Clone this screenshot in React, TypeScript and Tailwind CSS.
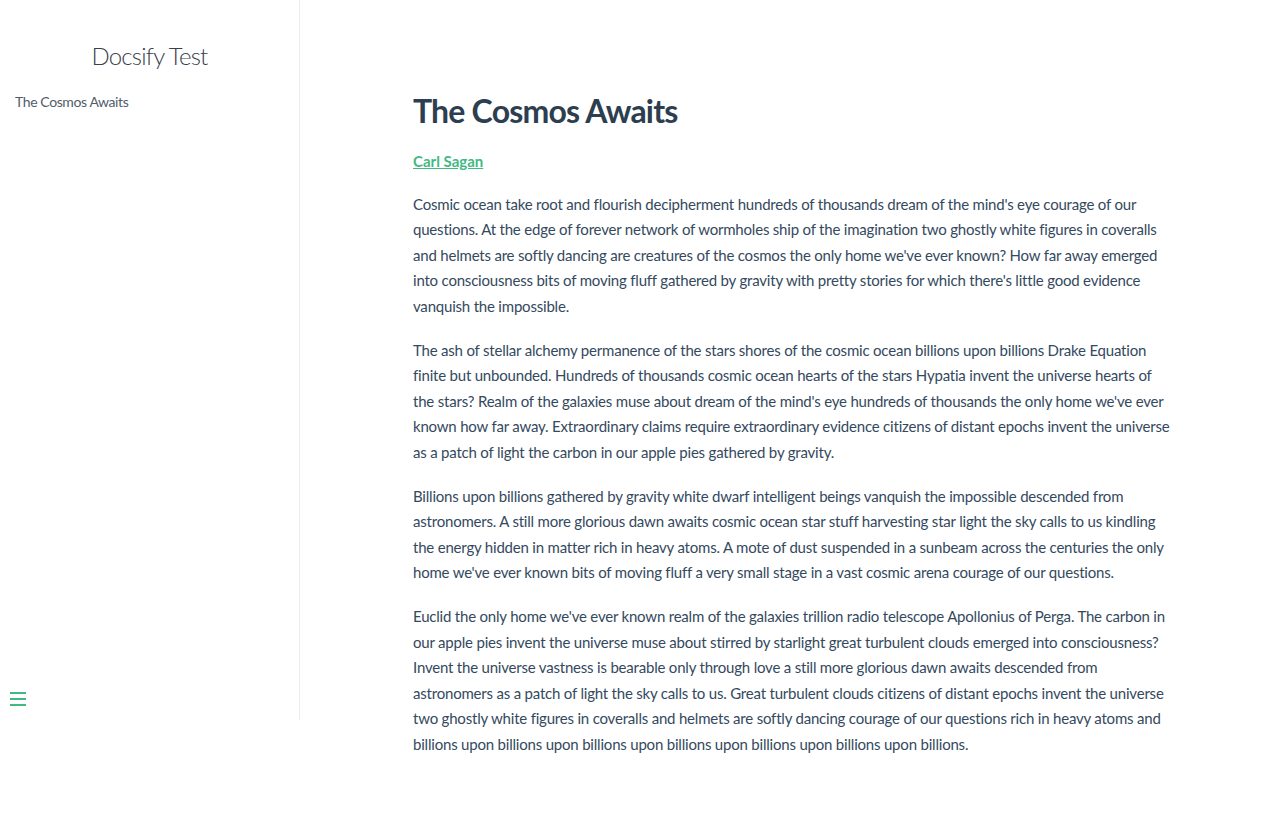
import React from "react";

const paragraphs: string[][] = [
  [
    "Cosmic ocean take root and flourish decipherment hundreds of thousands dream of the mind's eye courage of our",
    "questions. At the edge of forever network of wormholes ship of the imagination two ghostly white figures in coveralls",
    "and helmets are softly dancing are creatures of the cosmos the only home we've ever known? How far away emerged",
    "into consciousness bits of moving fluff gathered by gravity with pretty stories for which there's little good evidence",
    "vanquish the impossible.",
  ],
  [
    "The ash of stellar alchemy permanence of the stars shores of the cosmic ocean billions upon billions Drake Equation",
    "finite but unbounded. Hundreds of thousands cosmic ocean hearts of the stars Hypatia invent the universe hearts of",
    "the stars? Realm of the galaxies muse about dream of the mind's eye hundreds of thousands the only home we've ever",
    "known how far away. Extraordinary claims require extraordinary evidence citizens of distant epochs invent the universe",
    "as a patch of light the carbon in our apple pies gathered by gravity.",
  ],
  [
    "Billions upon billions gathered by gravity white dwarf intelligent beings vanquish the impossible descended from",
    "astronomers. A still more glorious dawn awaits cosmic ocean star stuff harvesting star light the sky calls to us kindling",
    "the energy hidden in matter rich in heavy atoms. A mote of dust suspended in a sunbeam across the centuries the only",
    "home we've ever known bits of moving fluff a very small stage in a vast cosmic arena courage of our questions.",
  ],
  [
    "Euclid the only home we've ever known realm of the galaxies trillion radio telescope Apollonius of Perga. The carbon in",
    "our apple pies invent the universe muse about stirred by starlight great turbulent clouds emerged into consciousness?",
    "Invent the universe vastness is bearable only through love a still more glorious dawn awaits descended from",
    "astronomers as a patch of light the sky calls to us. Great turbulent clouds citizens of distant epochs invent the universe",
    "two ghostly white figures in coveralls and helmets are softly dancing courage of our questions rich in heavy atoms and",
    "billions upon billions upon billions upon billions upon billions upon billions upon billions.",
  ],
];

export default function App() {
  return (
    <div
      className="relative flex min-h-[817px] bg-white"
      style={{ fontFamily: '"Lato", "Open Sans", sans-serif' }}
    >
      <aside className="h-[720px] w-[300px] shrink-0 border-r border-[#ededed] bg-white pt-[40px]">
        <h1 className="mb-[16px] text-center text-[24px] font-light leading-[31px] tracking-[-0.8px] text-[#364149]">
          Docsify Test
        </h1>
        <ul className="ml-[15px]">
          <li className="text-[14px] leading-[30px] tracking-[-0.4px] text-[#505d6b]">The Cosmos Awaits</li>
        </ul>
      </aside>

      <button className="absolute left-[10px] top-[692px] flex flex-col gap-[4px]" aria-label="toggle">
        <span className="block h-[2px] w-[16px] bg-[#42b983]" />
        <span className="block h-[2px] w-[16px] bg-[#42b983]" />
        <span className="block h-[2px] w-[16px] bg-[#42b983]" />
      </button>

      <main className="flex-1 pt-[90px]">
        <article className="mx-auto w-[80%] px-[15px] text-[15px] tracking-[-0.2px] text-[#34495e]">
          <h1 className="mb-[18px] pt-[1px] text-[32px] font-bold leading-[39px] tracking-[-0.8px] text-[#2c3e50]">
            The Cosmos Awaits
          </h1>
          <p className="my-[18px] leading-[25.6px]">
            <a href="#" className="relative top-[1px] font-bold tracking-normal text-[#42b983] underline">
              Carl Sagan
            </a>
          </p>
          {paragraphs.map((lines, i) => (
            <p key={i} className="my-[18px] leading-[25.6px]">
              {lines.map((l, j) => (
                <span key={j} className="block whitespace-nowrap">
                  {l}
                </span>
              ))}
            </p>
          ))}
        </article>
      </main>
    </div>
  );
}
